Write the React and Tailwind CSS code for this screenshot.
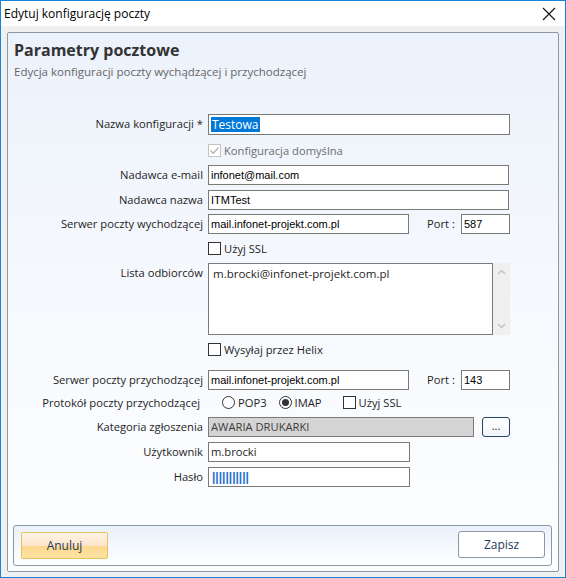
import React from 'react';

const ui = { fontFamily: '"Open Sans", "Noto Sans", sans-serif' };
const ms = { fontFamily: '"Liberation Sans", Arial, sans-serif' };

const Label = ({ children, className = '' }) => (
  <div className={`w-[200px] shrink-0 pr-[5px] text-right text-[11.2px] text-[#1e1e1e] ${className}`}>{children}</div>
);

const Input = ({ value, className = 'w-[301px]', bg = 'bg-white', style = ms, children }) => (
  <div
    className={`h-[20px] border border-[#7a7a7a] pl-[2px] flex items-center text-[11px] text-black leading-none ${bg} ${className}`}
    style={style}
  >
    {children ?? value}
  </div>
);

const Check = ({ checked, disabled, label }) => (
  <div className="flex items-center gap-[3px]">
    <div
      className={`w-[13px] h-[13px] border bg-white flex items-center justify-center ${
        disabled ? 'border-[#c4c4c4]' : 'border-[#333333]'
      }`}
    >
      {checked && (
        <svg width="11" height="11" viewBox="0 0 11 11">
          <path d="M1.5 5.5 L4.2 8.2 L9.5 2.5" fill="none" stroke={disabled ? '#b4b4b4' : '#333'} strokeWidth="1.3" />
        </svg>
      )}
    </div>
    <span className={`text-[11.2px] ${disabled ? 'text-[#6d6d6d]' : 'text-[#1e1e1e]'}`}>{label}</span>
  </div>
);

const Radio = ({ checked, label }) => (
  <div className="flex items-center gap-[3px]">
    <div className="w-[13px] h-[13px] rounded-full border border-[#333333] bg-white flex items-center justify-center">
      {checked && <div className="w-[7px] h-[7px] rounded-full bg-[#333333]" />}
    </div>
    <span className="text-[11.2px] text-[#1e1e1e]">{label}</span>
  </div>
);

const Row = ({ label, className = '', children, labelClass = '' }) => (
  <div className={`flex items-center ${className}`}>
    <Label className={labelClass}>{label}</Label>
    {children}
  </div>
);

const App = () => {
  return (
    <div className="w-[566px] h-[578px] border border-[#1883d7] bg-[#f0f0f0] flex flex-col overflow-hidden" style={ui}>
      {/* Title bar */}
      <div className="h-[25px] shrink-0 bg-white flex items-center justify-between pl-[3px] pr-[8px]">
        <span className="text-[12px] text-black">Edytuj konfigurację poczty</span>
        <svg width="14" height="14" viewBox="0 0 14 14" className="mr-[1px]">
          <path d="M1 1 L13 13 M13 1 L1 13" stroke="#111" strokeWidth="1.1" fill="none" />
        </svg>
      </div>

      <div className="flex-1 flex flex-col px-[6px] pt-[6px] pb-[5px]">
        <div className="flex-1 flex flex-col border border-[#8a98a8] rounded-[2px] bg-gradient-to-b from-[#ecf2fb] via-[#f6f9fd] to-[#fdfeff]">
          {/* Header */}
          <div className="pl-[6px] pt-[7px]">
            <div className="text-[16px] leading-[20px] font-bold text-[#333333]">Parametry pocztowe</div>
            <div className="mt-[4px] text-[11.5px] leading-[16px] text-[#666666]">
              Edycja konfiguracji poczty wychądzącej i przychodzącej
            </div>
          </div>

          {/* Form */}
          <div className="mt-[34px]">
            <Row label="Nazwa konfiguracji *">
              <Input style={ui} className="w-[302px] h-[21px]">
                <span className="bg-[#0078d7] text-white text-[12px] leading-[15px] px-[1px]">Testowa</span>
              </Input>
            </Row>

            <div className="mt-[6px] h-[20px] flex items-center pl-[200px]">
              <Check checked disabled label="Konfiguracja domyślna" />
            </div>

            <Row label="Nadawca e-mail" className="mt-[4px]">
              <Input value="infonet@mail.com" />
            </Row>

            <Row label="Nadawca nazwa" className="mt-[5px]">
              <Input value="ITMTest" />
            </Row>

            <Row label="Serwer poczty wychodzącej" className="mt-[4px]">
              <Input value="mail.infonet-projekt.com.pl" className="w-[201px]" />
              <span className="ml-[18px] w-[34px] text-[11.2px] text-[#1e1e1e]">Port :</span>
              <Input value="587" className="w-[49px]" />
            </Row>

            <div className="mt-[5px] h-[20px] flex items-center pl-[200px]">
              <Check label="Użyj SSL" />
            </div>

            <div className="mt-[4px] flex items-start">
              <Label className="pt-[2px]">Lista odbiorców</Label>
              <div className="flex">
                <div className="w-[285px] h-[72px] border border-[#7a7a7a] bg-white pl-[4px] pt-[1px] text-[11.5px] text-[#1e1e1e]">
                  m.brocki@infonet-projekt.com.pl
                </div>
                <div className="w-[17px] h-[72px] bg-[#f0f0f0] flex flex-col items-center justify-between py-[6px]">
                  <svg width="9" height="6" viewBox="0 0 9 6">
                    <path d="M1 5 L4.5 1.5 L8 5" fill="none" stroke="#c2c2c2" strokeWidth="1.4" />
                  </svg>
                  <svg width="9" height="6" viewBox="0 0 9 6">
                    <path d="M1 1 L4.5 4.5 L8 1" fill="none" stroke="#c2c2c2" strokeWidth="1.4" />
                  </svg>
                </div>
              </div>
            </div>

            <div className="mt-[5px] h-[20px] flex items-center pl-[200px]">
              <Check label="Wysyłaj przez Helix" />
            </div>

            <Row label="Serwer poczty przychodzącej" className="mt-[10px]">
              <Input value="mail.infonet-projekt.com.pl" className="w-[201px]" />
              <span className="ml-[18px] w-[34px] text-[11.2px] text-[#1e1e1e]">Port :</span>
              <Input value="143" className="w-[49px]" />
            </Row>

            <Row label="Protokół poczty przychodzącej" className="mt-[3px] h-[20px]" labelClass="pr-[8px]">
              <div className="ml-[14px] flex items-center">
                <Radio label="POP3" />
                <div className="ml-[12px]">
                  <Radio checked label="IMAP" />
                </div>
                <div className="ml-[21px]">
                  <Check label="Użyj SSL" />
                </div>
              </div>
            </Row>

            <Row label="Kategoria zgłoszenia" className="mt-[4px]">
              <Input className="w-[266px]" bg="bg-[#d4d4d4]" style={ui}>
                <span className="text-[11.2px] text-[#3c3c3c]">AWARIA DRUKARKI</span>
              </Input>
              <div className="ml-[8px] w-[28px] h-[20px] rounded-[3px] border border-[#27446a] bg-gradient-to-b from-white to-[#f2f5f9] flex items-center justify-center text-[11px] text-[#1e1e1e] leading-none pb-[3px]">
                ...
              </div>
            </Row>

            <Row label="Użytkownik" className="mt-[5px]">
              <Input className="w-[202px]" style={ui}>
                <span className="text-[11.2px] text-[#1e1e1e]">m.brocki</span>
              </Input>
            </Row>

            <Row label="Hasło" className="mt-[5px]">
              <Input className="w-[202px]">
                <span className="text-[12px] font-bold text-[#1f6fd1] pl-[1px]">|||||||||||</span>
              </Input>
            </Row>
          </div>

          <div className="flex-1" />

          {/* Footer */}
          <div className="ml-[5px] mr-[6px] mb-[5px] h-[41px] border border-[#8a97a6] rounded-[3px] bg-gradient-to-b from-[#eaf1fb] to-[#fefeff] flex items-center justify-between pl-[7px] pr-[6px]">
            <button
              className="w-[87px] h-[27px] border border-[#e2c35f] rounded-[2px] text-[12px] text-[#1e395b] bg-[linear-gradient(to_bottom,#fff3e6_0%,#fde5cb_50%,#fdd98f_51%,#fde3a2_100%)]"
              style={ui}
            >
              Anuluj
            </button>
            <button
              className="w-[87px] h-[27px] mb-[2px] border border-[#8a97a6] rounded-[3px] text-[12px] text-[#1e395b] bg-white"
              style={ui}
            >
              Zapisz
            </button>
          </div>
        </div>
      </div>
    </div>
  );
};

export default App;
